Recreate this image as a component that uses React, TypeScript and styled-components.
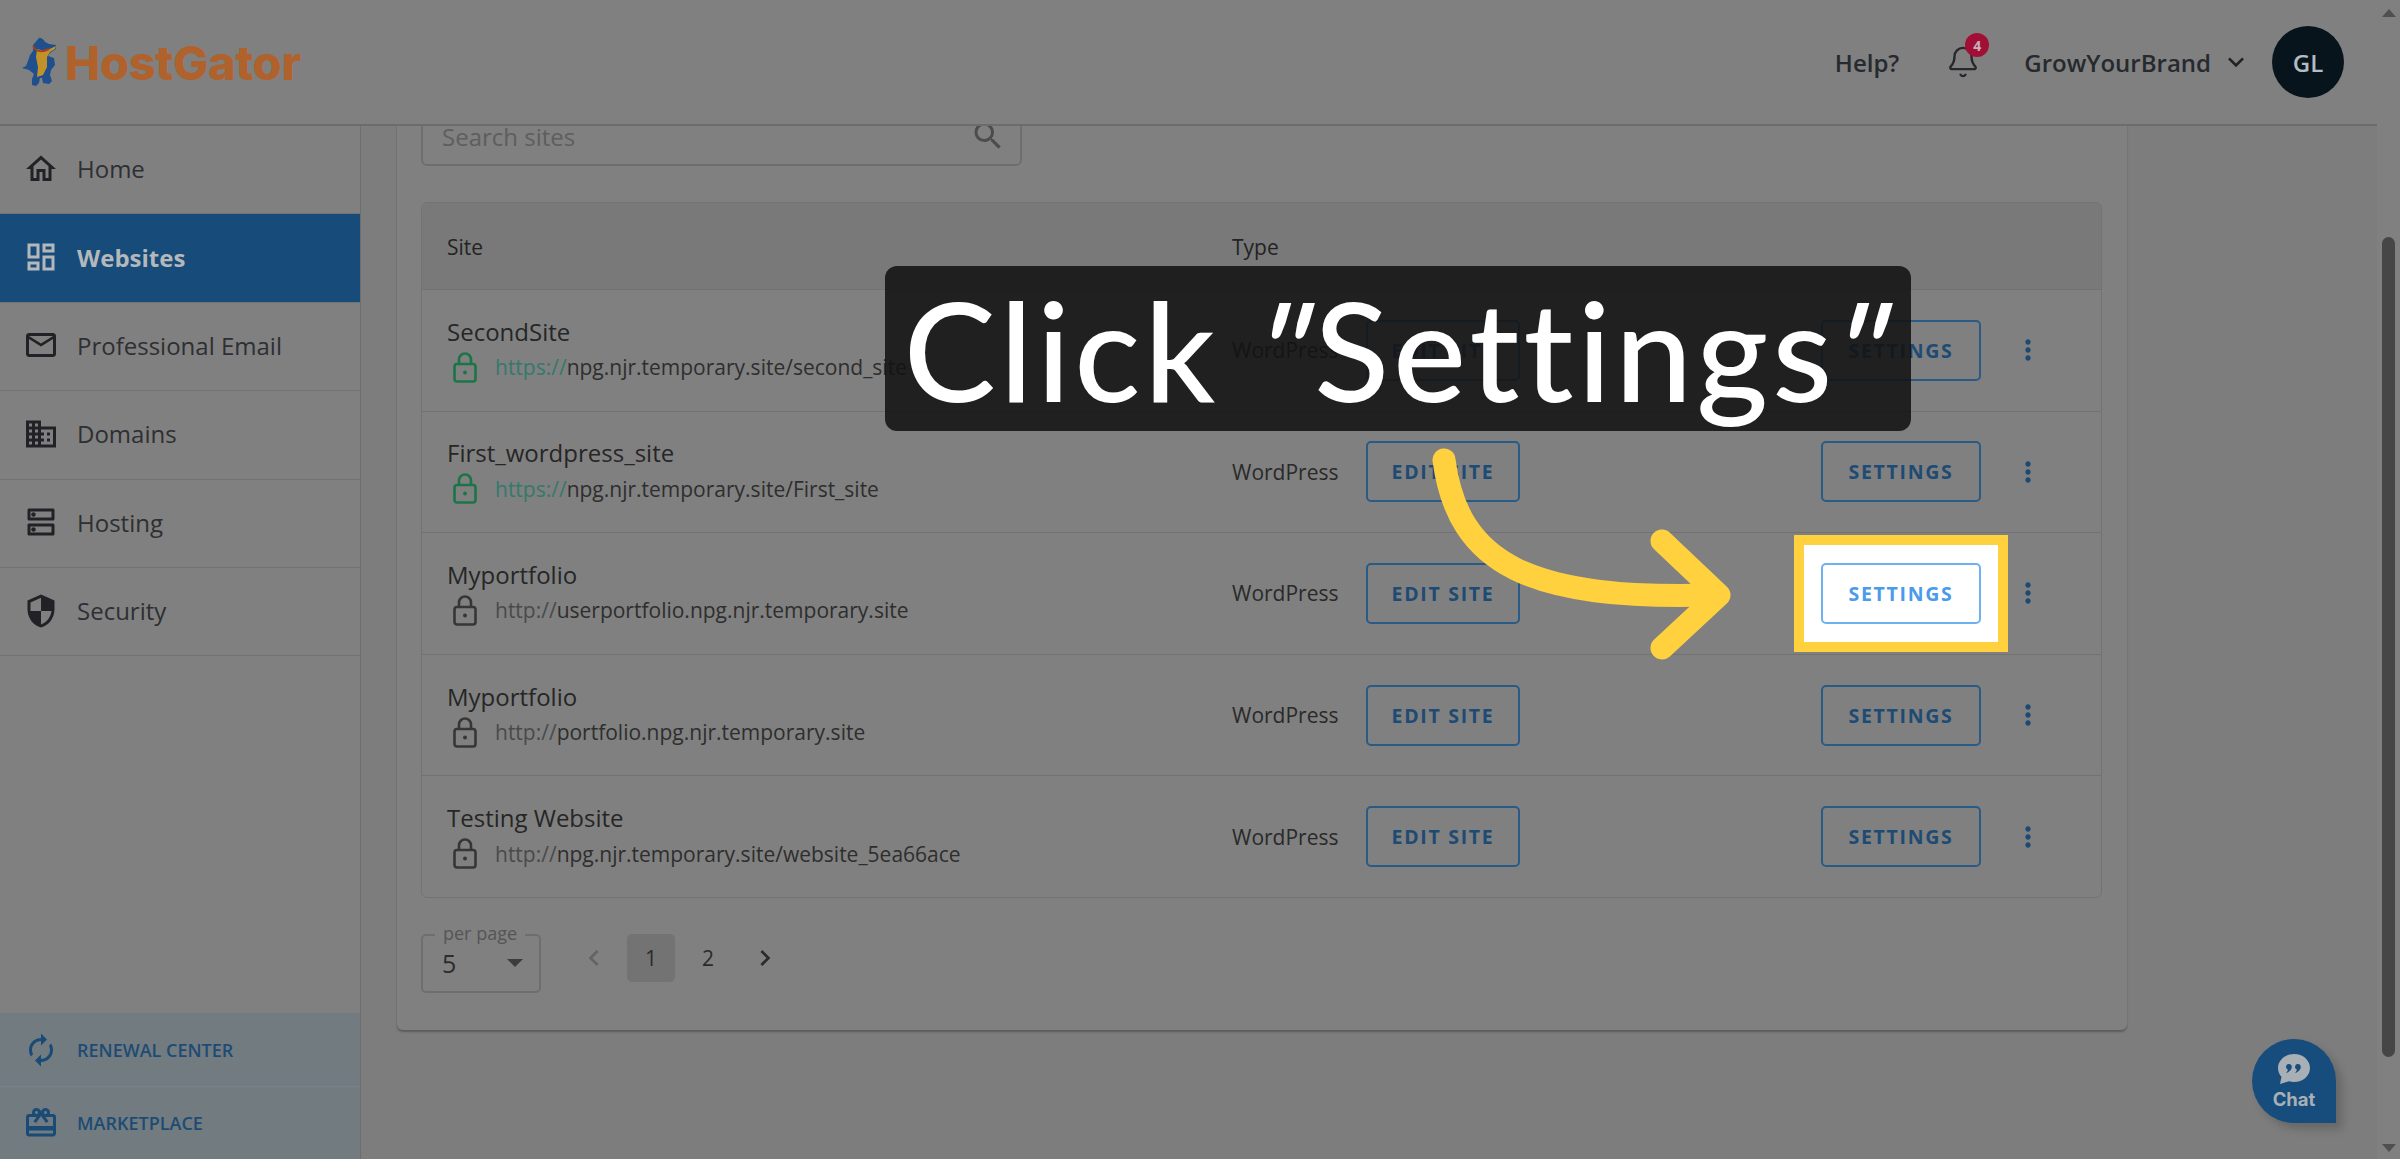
import React from "react";
import styled, { createGlobalStyle } from "styled-components";
import {
  MdOutlineHome, MdOutlineDashboard, MdOutlineEmail, MdOutlineDomain, MdOutlineDns, MdSecurity,
  MdAutorenew, MdOutlineCardGiftcard, MdSearch, MdMoreVert, MdKeyboardArrowDown, MdChevronLeft, MdChevronRight,
} from "react-icons/md";
import { Bell } from "lucide-react";

const Global = createGlobalStyle`
  html, body { margin: 0; height: 100%; overflow: hidden; background: #7f7f7f; }
  * { box-sizing: border-box; }
  body { font-family: "Open Sans", "Liberation Sans", sans-serif; color: #2b2b2b; }
`;

const Page = styled.div`
  position: relative; width: 2400px; height: 1159px; display: flex; overflow: hidden; background: #7e7e7e;
`;
const Shell = styled.div`flex: 1; min-width: 0; display: flex; flex-direction: column;`;
const Scrollbar = styled.div`
  width: 23px; display: flex; flex-direction: column; align-items: center; padding: 9px 0 7px 0; background: #808080;
`;
const ArrowUp = styled.div`
  width: 0; height: 0; border-left: 7px solid transparent; border-right: 7px solid transparent; border-bottom: 8px solid #505050;
`;
const ArrowDown = styled(ArrowUp)`
  transform: rotate(180deg); margin-top: auto;
`;
const Thumb = styled.div`
  width: 13px; height: 820px; margin-top: 220px; border-radius: 7px; background: #464646;
`;

const Header = styled.header`
  height: 126px; flex: none; display: flex; align-items: center; padding: 0 33px 0 21px; background: #808080; border-bottom: 2px solid #6c6c6c;
`;
const Logo = styled.div`display: flex; align-items: center; gap: 8px;`;
const LogoText = styled.span`
  font-family: "Inter", sans-serif; font-weight: 800; font-size: 47px; line-height: 1; letter-spacing: -0.3px; color: #b0622c;
`;
const HeaderRight = styled.div`margin-left: auto; display: flex; align-items: center;`;
const HeaderText = styled.span`font-size: 24px; font-weight: 600; color: #262a2e;`;
const BellWrap = styled.div`
  position: relative; width: 34px; height: 34px; margin-left: 47px; color: #26282c; display: flex; align-items: center; justify-content: center;
`;
const Badge = styled.span`
  position: absolute; top: -12px; right: -9px; width: 24px; height: 24px; border-radius: 50%; background: #a10f36; color: #c4b2b8;
  font-size: 14px; font-weight: 700; display: flex; align-items: center; justify-content: center;
`;
const UserName = styled(HeaderText)`margin-left: 44px;`;
const ChevronBox = styled.span`display: flex; margin-left: 9px; color: #202226;`;
const Avatar = styled.div`
  width: 72px; height: 72px; margin-left: 20px; border-radius: 50%; background: #08141c; color: #b2bcc2; font-size: 24px; font-weight: 600;
  display: flex; align-items: center; justify-content: center;
`;

const Body = styled.div`flex: 1; min-height: 0; display: flex;`;
const Sidebar = styled.nav`
  width: 361px; flex: none; display: flex; flex-direction: column; background: #808080; border-right: 1px solid #6e6e6e;
`;
const NavItem = styled.div<{ $active?: boolean }>`
  height: 88.4px; flex: none; display: flex; align-items: center; gap: 18px; padding: 0 0 2px 23px; font-size: 24px;
  font-weight: ${(p) => (p.$active ? 700 : 500)};
  color: ${(p) => (p.$active ? "#b4b8bb" : "#2e2f33")};
  background: ${(p) => (p.$active ? "#164b7a" : "transparent")};
  border-bottom: 1px solid #727272;
  & > svg { width: 36px; height: 36px; color: ${(p) => (p.$active ? "#b4b8bb" : "#222226")}; flex: none; }
`;
const SideFoot = styled.div`margin-top: auto; background: #717b80;`;
const FootItem = styled.div`
  height: 73px; display: flex; align-items: center; gap: 18px; padding-left: 23px; font-size: 18px; font-weight: 600; color: #1e4b73;
  & + & { border-top: 1px solid #78808a; }
  & > svg { width: 36px; height: 36px; color: #1a4a76; flex: none; }
`;

const Main = styled.main`
  flex: 1; min-width: 0; overflow: hidden; display: flex; flex-direction: column; align-items: flex-start; padding-left: 36px; background: #7d7d7d;
`;
const Card = styled.section`
  flex: none; width: 1730px; height: 960px; margin-top: -56px; padding: 36px 25px 0 24px; background: #808080; border-radius: 6px;
  box-shadow: 0 2px 2px #5c5c5c;
`;
const Search = styled.div`
  width: 601px; height: 60px; display: flex; align-items: center; justify-content: space-between; padding: 0 14px 0 19px;
  border: 2px solid #6e6e6e; border-radius: 6px; font-size: 24px; color: #5e5e5e;
`;
const SearchIcon = styled(MdSearch)`width: 36px; height: 36px; color: #4c4c4c;`;
const Table = styled.div`
  margin-top: 36px; border: 1px solid #737373; border-radius: 6px; width: 1681px;
`;
const Row = styled.div`
  height: 121.6px; display: grid; grid-template-columns: 785px 134px 455px 195px 24px; align-items: center; padding-left: 25px;
  border-top: 1px solid #727272;
`;
const HeadRow = styled(Row)`
  height: 86px; padding-top: 2px; background: #797979; border-top: 0; font-size: 21px; font-weight: 500; color: #232323; border-radius: 6px 6px 0 0;
`;
const SiteCell = styled.div`display: flex; flex-direction: column; padding-bottom: 3px;`;
const SiteName = styled.div`font-size: 24px; line-height: 33px; color: #262626;`;
const UrlLine = styled.div`display: flex; align-items: center; gap: 18px; padding-left: 6px; font-size: 21px; line-height: 30px; margin-top: 4px; color: #2e2e2e;`;
const Scheme = styled.span<{ $secure?: boolean }>`color: ${(p) => (p.$secure ? "#35796a" : "#4a4a4a")};`;
const TypeText = styled.div`font-size: 21px; color: #2a2a2a;`;
const OutlineButton = styled.div<{ $lit?: boolean }>`
  position: relative; display: flex; align-items: center; justify-content: center; height: 61px; border-radius: 5px;
  font-size: 19.5px; font-weight: 700; letter-spacing: 1.7px;
  border: 2px solid ${(p) => (p.$lit ? "#6db1f2" : "#2a5a86")};
  color: ${(p) => (p.$lit ? "#4a9bea" : "#1e4b73")};
  background: ${(p) => (p.$lit ? "#fff" : "transparent")};
`;
const EditButton = styled(OutlineButton)`width: 154px;`;
const SettingsButton = styled(OutlineButton)`width: 160px;`;
const SettingsCell = styled.div<{ $lit?: boolean }>`
  position: relative; width: fit-content;
  ${(p) => (p.$lit ? `
    z-index: 1;
    &::before {
      content: ""; position: absolute; inset: -28px -27px; border: 10px solid #ffd13f; background: #fff;
    }
  ` : "")}
`;
const Dots = styled(MdMoreVert)`width: 32px; height: 32px; margin-left: -4px; color: #1d4a72;`;

const Pager = styled.div`margin-top: 36px; display: flex; align-items: flex-start;`;
const PerPage = styled.div`
  position: relative; width: 120px; height: 59px; border: 2px solid #6e6e6e; border-radius: 5px; display: flex; align-items: center;
  justify-content: space-between; padding: 0 16px 0 19px; font-size: 25px; color: #2c2c2c;
`;
const Legend = styled.span`
  position: absolute; top: -14px; left: 12px; padding: 0 8px; font-size: 18px; line-height: 22px; color: #555; background: #808080; white-space: nowrap;
`;
const Caret = styled.span`
  width: 0; height: 0; border-left: 8px solid transparent; border-right: 8px solid transparent; border-top: 8px solid #3c3c3c;
`;
const PageList = styled.div`display: flex; align-items: center; margin-left: 29px; gap: 9px;`;
const PageCell = styled.div<{ $current?: boolean; $muted?: boolean }>`
  width: 48px; height: 48px; display: flex; align-items: center; justify-content: center; border-radius: 5px; font-size: 21px;
  background: ${(p) => (p.$current ? "#737373" : "transparent")};
  color: ${(p) => (p.$muted ? "#636363" : "#2a2a2a")};
  & > svg { width: 32px; height: 32px; }
`;
const Footer = styled.footer`
  width: 100%; margin-top: 125px; margin-left: -36px; text-align: center; font-size: 21px; line-height: 28px; color: #2a2a2a; flex: none;
`;

const Banner = styled.div`
  position: absolute; left: 885px; top: 266px; width: 1026px; height: 165px; border-radius: 12px; background: rgba(17, 17, 17, 0.865);
  display: flex; align-items: center; justify-content: center; color: #fff; z-index: 3;
  font-family: "Lato", sans-serif; font-size: 138px; font-weight: 500; letter-spacing: 4px; font-variant-ligatures: none; white-space: nowrap; line-height: 1;
`;
const Quote = styled.span`display: inline-block; transform: skewX(-16deg);`;
const ArrowArt = styled.svg`position: absolute; left: 0; top: 0; z-index: 4; pointer-events: none;`;

const ChatBubble = styled.div`
  position: absolute; left: 2252px; top: 1039px; width: 84px; height: 84px; border-radius: 50% 50% 0 50%; background: #164d7d;
  box-shadow: 6px 6px 10px rgba(0,0,0,.18); z-index: 2; display: flex; flex-direction: column; align-items: center; padding-top: 14px; gap: 4px;
  color: #a8b0b6; font-family: "Inter", sans-serif; font-weight: 700; font-size: 18.5px; line-height: 20px;
`;

const Lock = ({ color }: { color: string }) => (
  <svg width="24" height="31" viewBox="0 0 24 31" fill="none" stroke={color} strokeWidth="2.6">
    <rect x="1.5" y="12" width="21" height="17.5" rx="2.5" />
    <path d="M6 12V7.500a6 6 0 0 1 12 0V12" />
    <circle cx="12" cy="20.500" r="2" fill={color} stroke="none" />
  </svg>
);

const Gator = () => (
  <svg width="36" height="50" viewBox="0 0 36 50">
    <path d="M18 1C20 0 23 3 24 5L28 7L35 8L35 12L29 16L27 19L33 21L34 28L30 33L29 38L31 44L28 47L22 46L21 41L19 41L18 46L15 49L11 48L11 42L13 37L8 33L1 31L5 29L7 24L9 18L12 14L12 8Z" fill="#1f4f8c" />
    <path d="M16 12L24 14L33 10L35 9L34 12L29 15L26 20L26 30L22 38L16 40L17 30L15 20Z" fill="#c2922a" />
    <path d="M12 9C14 14 20 16 28 12" fill="none" stroke="#a5401f" strokeWidth="2" />
  </svg>
);

const rows = [
  { name: "SecondSite", secure: true, url: "npg.njr.temporary.site/second_site" },
  { name: "First_wordpress_site", secure: true, url: "npg.njr.temporary.site/First_site" },
  { name: "Myportfolio", secure: false, url: "userportfolio.npg.njr.temporary.site", lit: true },
  { name: "Myportfolio", secure: false, url: "portfolio.npg.njr.temporary.site" },
  { name: "Testing Website", secure: false, url: "npg.njr.temporary.site/website_5ea66ace" },
];

export default function App() {
  return (
    <Page>
      <Global />
      <Shell>
        <Header>
          <Logo>
            <Gator />
            <LogoText>HostGator</LogoText>
          </Logo>
          <HeaderRight>
            <HeaderText>Help?</HeaderText>
            <BellWrap>
              <Bell size={34} strokeWidth={1.7} />
              <Badge>4</Badge>
            </BellWrap>
            <UserName>GrowYourBrand</UserName>
            <ChevronBox><MdKeyboardArrowDown size={32} /></ChevronBox>
            <Avatar>GL</Avatar>
          </HeaderRight>
        </Header>
        <Body>
          <Sidebar>
            <NavItem><MdOutlineHome />Home</NavItem>
            <NavItem $active><MdOutlineDashboard />Websites</NavItem>
            <NavItem><MdOutlineEmail />Professional Email</NavItem>
            <NavItem><MdOutlineDomain />Domains</NavItem>
            <NavItem><MdOutlineDns />Hosting</NavItem>
            <NavItem><MdSecurity />Security</NavItem>
            <SideFoot>
              <FootItem><MdAutorenew />RENEWAL CENTER</FootItem>
              <FootItem><MdOutlineCardGiftcard />MARKETPLACE</FootItem>
            </SideFoot>
          </Sidebar>
          <Main>
            <Card>
              <Search>
                Search sites
                <SearchIcon />
              </Search>
              <Table>
                <HeadRow>
                  <div>Site</div>
                  <div>Type</div>
                </HeadRow>
                {rows.map((r, i) => (
                  <Row key={i}>
                    <SiteCell>
                      <SiteName>{r.name}</SiteName>
                      <UrlLine>
                        <Lock color={r.secure ? "#1b7549" : "#363636"} />
                        <span>
                          <Scheme $secure={r.secure}>{r.secure ? "https://" : "http://"}</Scheme>
                          {r.url}
                        </span>
                      </UrlLine>
                    </SiteCell>
                    <TypeText>WordPress</TypeText>
                    <div><EditButton>EDIT SITE</EditButton></div>
                    <SettingsCell $lit={r.lit}><SettingsButton $lit={r.lit}>SETTINGS</SettingsButton></SettingsCell>
                    <Dots />
                  </Row>
                ))}
              </Table>
              <Pager>
                <PerPage>
                  <Legend>per page</Legend>
                  5
                  <Caret />
                </PerPage>
                <PageList>
                  <PageCell $muted><MdChevronLeft /></PageCell>
                  <PageCell $current>1</PageCell>
                  <PageCell>2</PageCell>
                  <PageCell><MdChevronRight /></PageCell>
                </PageList>
              </Pager>
            </Card>
            <Footer>© Copyright 2025 Hostgator.com. All rights reserved.</Footer>
          </Main>
        </Body>
      </Shell>
      <Scrollbar>
        <ArrowUp />
        <Thumb />
        <ArrowDown />
      </Scrollbar>
      <Banner>Click&nbsp;<Quote>"</Quote>Settings<Quote>"</Quote></Banner>
      <ArrowArt width="2400" height="1159" viewBox="0 0 2400 1159" fill="none" stroke="#ffd13f" strokeWidth="23" strokeLinecap="round" strokeLinejoin="round">
        <path d="M1444 460C1458 565 1530 600 1712 595" />
        <path d="M1662 541L1719 595L1662 648" />
      </ArrowArt>
      <ChatBubble>
        <svg width="34" height="32" viewBox="0 0 34 32">
          <path d="M17 1C8 1 1 7.500 1 15c0 3.500 1.300 6.500 3.500 8.800L3 31l9-2.700c1.600.5 3.300.7 5 .7 9 0 16-6.200 16-14S26 1 17 1z" fill="#a8b0b6" />
          <path d="M12 11a2.800 2.800 0 0 0-1.200 5.400c-.1 1.500-.9 2.700-1.800 3.600 2.800-.6 5.800-3.300 5.800-6.300 0-1.500-1.200-2.700-2.800-2.700zM21 11a2.800 2.800 0 0 0-1.200 5.400c-.1 1.500-.9 2.700-1.800 3.600 2.800-.6 5.800-3.300 5.800-6.300 0-1.500-1.200-2.700-2.800-2.700z" fill="#164d7d" />
        </svg>
        <span>Chat</span>
      </ChatBubble>
    </Page>
  );
}
